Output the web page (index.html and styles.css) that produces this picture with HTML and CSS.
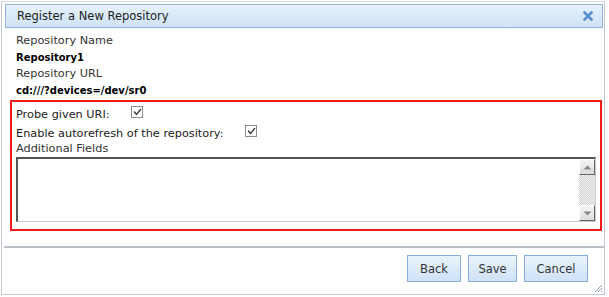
FILE: index.html
```html
<!DOCTYPE html>
<html>
<head>
<meta charset="utf-8">
<link rel="stylesheet" href="styles.css">
</head>
<body>
<div class="dialog">
  <div class="titlebar">
    <span class="title">Register a New Repository</span>
    <svg class="close" width="10" height="10" viewBox="0 0 10 10"><path d="M1.5 1.5 L8.5 8.5 M8.5 1.5 L1.5 8.5" stroke="#5b8fcf" stroke-width="2.6" stroke-linecap="square"/></svg>
  </div>
  <div class="content">
    <div class="label">Repository Name</div>
    <div class="value">Repository1</div>
    <div class="label">Repository URL</div>
    <div class="value">cd:///?devices=/dev/sr0</div>
    <div class="highlight">
      <div class="row r1"><span class="rlabel">Probe given URI:</span><span class="check"><svg width="9" height="8" viewBox="0 0 9 8"><path d="M1 3.5 L3.5 6.5 L8 1" stroke="#333" stroke-width="1.2" fill="none"/></svg></span></div>
      <div class="row r2"><span class="rlabel">Enable autorefresh of the repository:</span><span class="check"><svg width="9" height="8" viewBox="0 0 9 8"><path d="M1 3.5 L3.5 6.5 L8 1" stroke="#333" stroke-width="1.2" fill="none"/></svg></span></div>
      <div class="label af">Additional Fields</div>
      <div class="textarea">
        <div class="area"></div>
        <div class="scroll">
          <div class="sbtn"><svg width="9" height="5" viewBox="0 0 9 5"><path d="M0.5 4.5 L4.5 0.5 L8.5 4.5Z" fill="#8a8a8a"/></svg></div>
          <div class="track"></div>
          <div class="sbtn"><svg width="9" height="5" viewBox="0 0 9 5"><path d="M0.5 0.5 L4.5 4.5 L8.5 0.5Z" fill="#8a8a8a"/></svg></div>
        </div>
      </div>
    </div>
  </div>
  <div class="footer">
    <button class="btn back">Back</button>
    <button class="btn save">Save</button>
    <button class="btn cancel">Cancel</button>
  </div>
  <svg class="grip" width="10" height="10" viewBox="0 0 10 10"><path d="M9 2 L2 9 M9 5 L5 9 M9 8 L8 9" stroke="#8a9aa8" stroke-width="1"/></svg>
</div>
</body>
</html>
```
FILE: styles.css
```css
html, body {
  margin: 0;
  padding: 0;
  background: #fff;
}
body {
  font-family: "DejaVu Sans", Verdana, sans-serif;
  font-size: 11.3px;
  color: #222;
  width: 609px;
  height: 297px;
  overflow: hidden;
}
.dialog {
  position: relative;
  box-sizing: border-box;
  margin: 1px 0 0 1px;
  width: 604px;
  height: 294px;
  border: 1px solid #c4c8d0;
  border-top-color: #d8dce2;
  padding: 2px 0 0 0;
}
.titlebar {
  box-sizing: border-box;
  margin: 0 0 0 3px;
  width: 598px;
  height: 24px;
  border: 1px solid #8fb3dd;
  background: linear-gradient(#e6f1fc, #cfe3f7);
  display: flex;
  align-items: center;
  justify-content: space-between;
  padding: 0 9px 0 11px;
}
.title {
  font-size: 11.5px;
  color: #222;
}
.close { display: block; }
.content {
  padding: 5px 0 0 14px;
}
.label {
  line-height: 16px;
  height: 16px;
  color: #333;
}
.value {
  font-weight: bold;
  color: #000;
  line-height: 17px;
  height: 17px;
  font-size: 10px;
}
.highlight {
  box-sizing: border-box;
  margin: 1px 0 0 -6px;
  width: 592px;
  height: 131px;
  border: 2px solid #f21a1a;
  padding: 3px 0 0 4px;
}
.row {
  display: flex;
  align-items: center;
  height: 19px;
}
.r1 .rlabel { width: 115px; }
.r2 .rlabel { width: 229px; }
.check {
  box-sizing: border-box;
  width: 12px;
  height: 12px;
  border: 1px solid #8a8a8a;
  background: #fff;
  display: flex;
  align-items: center;
  justify-content: center;
  margin-top: -5px;
}
.check svg { display: block; }
.af { margin-top: -2px; }
.textarea {
  box-sizing: border-box;
  width: 580px;
  height: 65px;
  border-top: 2px solid #555;
  border-left: 2px solid #555;
  border-right: 1px solid #ccc;
  border-bottom: 1px solid #ccc;
  display: flex;
  background: #fff;
}
.area { flex: 1; }
.scroll {
  width: 16px;
  display: flex;
  flex-direction: column;
  background-color: #e8e8e8;
  background-image: repeating-conic-gradient(#d0d0d0 0 25%, #f4f4f4 0 50%);
  background-size: 2px 2px;
}
.sbtn {
  box-sizing: border-box;
  height: 16px;
  background: linear-gradient(#f4f4f4, #dcdcdc);
  border: 1px solid #fff;
  border-right-color: #666;
  border-bottom-color: #666;
  display: flex;
  align-items: center;
  justify-content: center;
}
.sbtn svg { display: block; }
.track { flex: 1; }
.footer {
  margin: 15px 0 0 2px;
  width: 600px;
  border-top: 2px solid #b8c0c6;
  display: flex;
  justify-content: flex-end;
  gap: 7px;
  padding: 7px 16px 0 0;
  box-sizing: border-box;
}
.btn {
  font-family: "DejaVu Sans", Verdana, sans-serif;
  font-size: 11.5px;
  color: #333;
  height: 27px;
  border: 1px solid #86afe0;
  background: linear-gradient(#eaf3fd, #cfe2f8);
  padding: 0;
  margin: 0;
}
.back { width: 54px; }
.save { width: 49px; }
.cancel { width: 64px; }
.grip {
  position: absolute;
  right: 1px;
  bottom: 1px;
}
```
